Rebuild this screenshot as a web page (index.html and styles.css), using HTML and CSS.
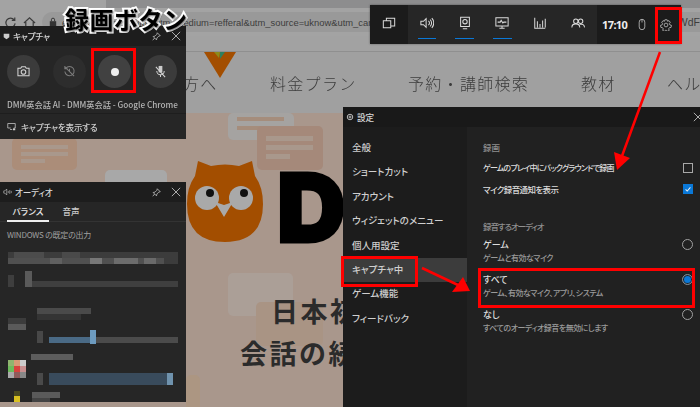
FILE: index.html
```html
<!DOCTYPE html>
<html lang="ja">
<head>
<meta charset="utf-8">
<title>録画ボタン</title>
<link rel="stylesheet" href="styles.css">
</head>
<body>
<div class="desktop">
  <div class="screen">
    <main class="page">
      <div class="tabstrip"><div class="tab-active"></div></div>
      <div class="toolbar">
        <svg class="tool" viewBox="0 0 14 14"><path d="M11 4.200A5 5 0 1 0 12 8M11.600 1.500v3.200H8.400"/></svg>
        <svg class="tool" viewBox="0 0 14 14"><path d="M1 7.500 7 2l6 5.500M3 6.500V12.500h8V6.500"/></svg>
        <div class="urlbar">
          <svg class="lock" viewBox="0 0 10 12"><rect x="1" y="5" width="8" height="6.500"/><path class="shackle" d="M3 5V3.200a2 2 0 0 1 4 0V5"/></svg>
          <span class="url">eikaiwa.dmm.com/lp/?utm_medium=refferal&amp;utm_source=uknow&amp;utm_campaign</span>
          <span class="url url-end">WdF</span>
        </div>
      </div>
      <div class="bookmarks"></div>
      <nav class="nav">
        <span class="nav-a">方へ</span>
        <span class="nav-b">料金プラン</span>
        <span class="nav-c">予約・講師検索</span>
        <span class="nav-d">教材</span>
        <span class="nav-e">ヘル</span>
        <svg class="brand" viewBox="0 0 32 26"><path fill="#a34e00" d="M0 0h32L16 26z"/><path fill="#8c8a1c" d="M10 0h6l-1 6z"/><path fill="#2f7f5f" d="M16 0h5l-5 7z"/></svg>
      </nav>
      <section class="hero">
        <i class="bubble b0"></i><i class="bubble b1"></i><i class="bubble b2"></i><i class="bubble b3"></i>
        <i class="bubble b4"></i><i class="bubble b5"></i><i class="bubble b6"></i>
        <div class="logo">
          <svg class="owl" viewBox="0 0 76 81">
            <path fill="#a34e00" d="M11 0 24 5Q38 2 52 5L65 0 68 15Q76 26 76 43 76 81 38 81 0 81 0 43 0 26 8 15z"/>
            <circle cx="20" cy="37" r="12" fill="#a9a9a9"/><circle cx="54" cy="37" r="12" fill="#a9a9a9"/>
            <circle cx="23" cy="32" r="4" fill="#111"/><circle cx="57" cy="32" r="4" fill="#111"/>
            <path fill="#a9a9a9" d="M28 41 37 44 46 41 37 56z"/>
          </svg>
          <span class="logo-d">D</span>
        </div>
        <h2 class="head1">日本初</h2>
        <h2 class="head2">会話の続</h2>
      </section>
    </main>

    <section class="win capture">
      <header class="titlebar">
        <svg class="ti" viewBox="0 0 10 10"><path class="fill" d="M1 1h8v5L5 9 1 6z"/></svg>
        <span class="ttl">キャプチャ</span>
        <svg class="pin" viewBox="0 0 12 12"><path d="M7 1 11 5 9 5.500 6.500 8 6 10.500 1.500 6 4 5.500 6.500 3zM3.500 8 1 11"/></svg>
        <svg class="close" viewBox="0 0 12 12"><path d="M1 1 11 11M11 1 1 11"/></svg>
      </header>
      <div class="cap-btns">
        <div class="cbtn"><svg viewBox="0 0 14 14"><path d="M1 3.500h3l1-1.500h4l1 1.500h3v8H1z"/><circle cx="7" cy="7.500" r="2.500"/></svg></div>
        <div class="cbtn off"><svg viewBox="0 0 14 14"><path d="M3 3.500A5 5 0 1 1 2 7M2 1v3h3M7 4v3l2 2M2 2l10 10"/></svg></div>
        <div class="cbtn rec"><i class="dot"></i></div>
        <div class="cbtn"><svg viewBox="0 0 14 14"><path class="fill" d="M5 1h4v7H5z"/><path d="M3 6.500a4 4 0 0 0 8 0M7 10.500V13M2 2l10 11"/></svg></div>
      </div>
      <p class="cap-name">DMM英会話 AI - DMM英会話 - Google Chrome</p>
      <footer class="cap-link">
        <svg viewBox="0 0 12 12"><path d="M1 2h10v6H9M1 2v6h4M4 10h3"/><path class="fill" d="M8 8.500h3v2.500H8z"/></svg>
        <span>キャプチャを表示する</span>
      </footer>
    </section>

    <section class="win audio">
      <header class="titlebar">
        <svg class="ti" viewBox="0 0 12 10"><path d="M5 1 2.500 3.500H1v3h1.500L5 9zM7 3.500v3M9 2.500v5M11 3.500v3"/></svg>
        <span class="ttl">オーディオ</span>
        <svg class="pin" viewBox="0 0 12 12"><path d="M7 1 11 5 9 5.500 6.500 8 6 10.500 1.500 6 4 5.500 6.500 3zM3.500 8 1 11"/></svg>
        <svg class="close" viewBox="0 0 12 12"><path d="M1 1 11 11M11 1 1 11"/></svg>
      </header>
      <div class="tabs"><span class="tab on">バランス</span><span class="tab">音声</span></div>
      <p class="aud-label">WINDOWS の既定の出力</p>
      <svg class="mosaic" viewBox="0 0 186 165" shape-rendering="crispEdges">
        <rect x="8" y="6" width="170" height="12" fill="#3c3c3c"/>
        <rect x="8" y="12" width="156" height="6" fill="#505050"/>
        <rect x="14" y="6" width="30" height="6" fill="#4c4c4c"/>
        <rect x="50" y="12" width="12" height="6" fill="#606060"/>
        <rect x="90" y="12" width="12" height="6" fill="#777"/>
        <rect x="114" y="12" width="24" height="6" fill="#6c6c6c"/>
        <rect x="144" y="12" width="12" height="6" fill="#6a6a6a"/>
        <rect x="62" y="6" width="18" height="6" fill="#4a4a4a"/>
        <rect x="8" y="29" width="6" height="12" fill="#3e3e3e"/>
        <rect x="25" y="25" width="7" height="16" fill="#5a5a5a"/>
        <rect x="32" y="35" width="146" height="6" fill="#3f3f3f"/>
        <rect x="8" y="72" width="18" height="6" fill="#3c3c3c"/>
        <rect x="8" y="78" width="18" height="6" fill="#5a5a5a"/>
        <rect x="37" y="62" width="54" height="6" fill="#4a4a4a"/>
        <rect x="37" y="68" width="44" height="6" fill="#343434"/>
        <rect x="37" y="85" width="6" height="12" fill="#484848"/>
        <rect x="49" y="91" width="42" height="6" fill="#4a6a85"/>
        <rect x="90" y="84" width="6" height="14" fill="#6d9bbf"/>
        <rect x="96" y="91" width="82" height="6" fill="#4b4b4b"/>
        <rect x="31" y="108" width="42" height="6" fill="#5c5c5c"/>
        <rect x="37" y="127" width="6" height="12" fill="#4a4a4a"/>
        <rect x="49" y="127" width="118" height="12" fill="#394b5c"/>
        <rect x="167" y="127" width="6" height="12" fill="#6f92ad"/>
        <rect x="8" y="114" width="6" height="6" fill="#8fb56f"/><rect x="14" y="114" width="6" height="6" fill="#d79a76"/><rect x="20" y="114" width="6" height="6" fill="#ccc"/>
        <rect x="8" y="120" width="6" height="6" fill="#6dbb5c"/><rect x="14" y="120" width="6" height="6" fill="#d8433e"/><rect x="20" y="120" width="6" height="6" fill="#c98f8f"/>
        <rect x="8" y="126" width="6" height="6" fill="#aaa"/><rect x="14" y="126" width="6" height="6" fill="#8e5c5c"/><rect x="20" y="126" width="6" height="6" fill="#888"/>
        <rect x="14" y="150" width="6" height="7" fill="#d8c020"/><rect x="14" y="145" width="6" height="5" fill="#4a4a20"/>
        <rect x="32" y="146" width="28" height="6" fill="#5a5a5a"/>
        <rect x="32" y="152" width="18" height="5" fill="#444"/>
      </svg>
    </section>

    <section class="bar">
      <div class="bar-sec dark"><div class="bar-item">
        <svg viewBox="0 0 16 16"><path d="M1.500 5.500h8.500v8H1.500zM5 5.500V2.500h9.500v9H10"/></svg></div></div>
      <div class="bar-sec mid">
        <div class="bar-item sel"><svg viewBox="0 0 16 16"><path d="M7 3 4 6H1v4h3l3 3zM9.500 5.500a3 3 0 0 1 0 5M11.500 4a5.500 5.500 0 0 1 0 8M13.500 2.500a8 8 0 0 1 0 11"/></svg></div>
        <div class="bar-item sel"><svg viewBox="0 0 16 16"><path d="M3 1.500h10v10.500H3zM5.500 14.500h5"/><circle cx="8" cy="6.500" r="2.500"/></svg></div>
        <div class="bar-item sel"><svg viewBox="0 0 16 16"><path d="M1 2h14v9.500H1zM5 14h6M8 11.500V14M3 7h3l1-2 2 3 1-1h3"/></svg></div>
        <div class="bar-item"><svg viewBox="0 0 16 16"><path d="M2 2v12h12M5 13V6M8 13V9M11 13V5M14 13V3"/></svg></div>
        <div class="bar-item"><svg viewBox="0 0 16 16"><circle cx="5.500" cy="6" r="2.500"/><circle cx="11" cy="6" r="2.500"/><path d="M1 13q0-4 4.500-4T10 13M10 9.500q5-1 5.500 3.500"/></svg></div>
      </div>
      <div class="bar-sec dark right">
        <span class="time">17:10</span>
        <svg class="mouse" viewBox="0 0 10 16"><rect x="1.500" y="1.500" width="7" height="13" rx="3.500"/><path d="M5 1.500v4"/></svg>
        <svg class="gear" viewBox="0 0 16 16"><path d="M6.500 1h3l.5 2 2-.8 1.700 2.300-1.300 1.700.9 1.800 2 .5-.6 2.800-2.100.2-1.100 1.700.9 1.900-2.500 1.300-1.400-1.500H7.400l-1.400 1.500-2.500-1.300.9-1.900-1.100-1.700-2.100-.2L.600 8.500l2-.5.900-1.800L2.300 4.500 4 2.200l2 .8z"/><circle cx="8" cy="8" r="2.500"/></svg>
      </div>
    </section>

    <section class="win settings">
      <header class="set-title">
        <svg class="set-gear" viewBox="0 0 16 16"><circle cx="8" cy="8" r="5.500"/><circle cx="8" cy="8" r="2"/></svg>
        <span class="ttl">設定</span>
        <svg class="close" viewBox="0 0 12 12"><path d="M1 1 11 11M11 1 1 11"/></svg>
      </header>
      <div class="set-body">
        <ul class="set-menu">
          <li>全般</li><li>ショートカット</li><li>アカウント</li><li>ウィジェットのメニュー</li><li>個人用設定</li>
          <li class="cur">キャプチャ中</li><li>ゲーム機能</li><li>フィードバック</li>
        </ul>
        <div class="set-main">
          <h3 class="sec">録画</h3>
          <div class="check-row"><span>ゲームのプレイ中にバックグラウンドで録画</span><i class="box"></i></div>
          <div class="check-row tight"><span>マイク録音通知を表示</span><i class="box on"><svg viewBox="0 0 10 10"><path d="M2 5.500 4 7.500 8 3"/></svg></i></div>
          <h3 class="sec sec2">録音するオーディオ</h3>
          <div class="radio-row"><div><b>ゲーム</b><small>ゲームと有効なマイク</small></div><i class="radio"></i></div>
          <div class="radio-row"><div><b>すべて</b><small>ゲーム、有効なマイク、アプリ、システム</small></div><i class="radio on"></i></div>
          <div class="radio-row"><div><b>なし</b><small>すべてのオーディオ録音を無効にします</small></div><i class="radio"></i></div>
        </div>
      </div>
    </section>
  </div>

  <div class="callout">録画ボタン</div>
  <i class="mark m-rec"></i>
  <i class="mark m-gear"></i>
  <i class="mark m-menu"></i>
  <i class="mark m-all"></i>
  <svg class="arrows" viewBox="0 0 700 407">
    <path d="M660 52 622 156M422 268 458 285"/>
    <polygon points="617,170 614,152 630,158"/>
    <polygon points="470,291 452,292 463,277"/>
  </svg>
</div>
</body>
</html>
```

FILE: styles.css
```css
* { box-sizing: border-box; }
html, body { margin: 0; padding: 0; background: #000; }
ul, p, h2, h3 { margin: 0; padding: 0; list-style: none; }
i { display: block; font-style: normal; }

.desktop {
  position: relative;
  width: 700px;
  height: 407px;
  overflow: hidden;
  font-family: "Noto Sans CJK JP", "Noto Sans", sans-serif;
  font-feature-settings: "palt";
}
.screen { position: absolute; inset: 0; filter: blur(0.4px); }

/* ---------- dimmed web page ---------- */
.page { width: 700px; height: 407px; display: flex; flex-direction: column; background: #a9978c; }
.tabstrip { height: 8px; background: #8d8d8e; }
.tab-active { width: 106px; height: 8px; background: #a3a3a3; }
.toolbar { height: 28px; background: #a3a3a3; display: flex; align-items: center; gap: 6px; padding-left: 4px; }
.tool { width: 13px; height: 13px; flex: none; fill: none; stroke: #3c3c3c; stroke-width: 1.300; }
.urlbar { flex: 1; height: 20px; padding-left: 7px; border-radius: 10px 0 0 10px; background: #999; display: flex; align-items: center; gap: 5px; overflow: hidden; }
.lock { width: 8px; height: 10px; flex: none; fill: #333; }
.shackle { fill: none; stroke: #333; stroke-width: 1.200; }
.url { font: 9.400px "Liberation Sans", sans-serif; color: #3d3d3d; white-space: nowrap; }
.url-end { margin-left: auto; font-size: 10.500px; }
.bookmarks { height: 16px; background: #a2a2a2; border-bottom: 1px solid #8f8f8f; }
.nav { position: relative; height: 61px; background: #a0a0a0; font-size: 16px; color: #3c3c3c; display: flex; align-items: center; padding-left: 183px; white-space: nowrap; font-weight: 300; letter-spacing: 1.300px; font-feature-settings: normal; }
.nav span { flex: none; }
.nav-a { width: 87px; }
.nav-b { width: 138px; }
.nav-c { width: 173px; }
.nav-d { width: 86px; }
.brand { position: absolute; left: 204px; top: 0; width: 32px; height: 26px; }
.hero { position: relative; flex: 1; width: 343px; padding: 48px 0 0 187px; overflow: hidden; }
.bubble { position: absolute; border-radius: 5px; }
.b0 { left: 105px; top: 57px; width: 62px; height: 24px; background: #a8a8a8; }
.b1 { left: 12px; top: 25px; width: 65px; height: 32px;
  background: linear-gradient(#a9988c, #a9988c) 9px 7px / 47px 4px no-repeat,
    linear-gradient(#a9988c, #a9988c) 9px 14px / 47px 4px no-repeat,
    linear-gradient(#a9988c, #a9988c) 9px 21px / 24px 4px no-repeat, #ab8d79; }
.b2 { left: 228px; top: 0; width: 66px; height: 27px;
  background: linear-gradient(#a58d7c, #a58d7c) 9px 4px / 47px 4px no-repeat,
    linear-gradient(#a58d7c, #a58d7c) 9px 13px / 47px 4px no-repeat, #a5a3a1; }
.b3 { left: 257px; top: 13px; width: 66px; height: 44px;
  background: linear-gradient(#a9988c, #a9988c) 9px 10px / 47px 5px no-repeat,
    linear-gradient(#a9988c, #a9988c) 9px 19px / 47px 5px no-repeat,
    linear-gradient(#a9988c, #a9988c) 9px 28px / 24px 5px no-repeat, #a5897a; }
.b4 { left: 228px; top: 160px; width: 65px; height: 43px; background: #ab9f97; }
.b5 { left: 256px; top: 189px; width: 67px; height: 44px; background: #a99484; }
.b6 { left: 186px; top: 262px; width: 14px; height: 40px; background: #ac9682; }
.logo { position: relative; display: flex; align-items: flex-start; height: 81px; }
.owl { position: relative; width: 76px; height: 81px; flex: none; }
.logo-d { margin: -12px 0 0 14px; font: 900 95px/118px Inter, sans-serif; color: #000; -webkit-text-stroke: 3px #000; }
.head1, .head2 { position: relative; font-size: 27px; line-height: 40px; font-weight: 700; color: #2b2b2b; letter-spacing: 2.500px; white-space: nowrap; font-feature-settings: normal; }
.head1 { margin: 49px 0 0 84px; }
.head2 { margin: 2px 0 0 53px; }

/* ---------- game bar windows ---------- */
.win { position: absolute; color: #ddd; background: #262626; overflow: hidden; }
.titlebar { height: 20px; background: #1d1d1d; display: flex; align-items: center; padding: 0 5px 0 3px; gap: 3px; }
.ti { width: 7px; height: 7px; flex: none; fill: none; stroke: #ccc; }
.fill { fill: #ccc; stroke: none; }
.ttl { font-size: 8.600px; font-weight: 500; color: #d8d8d8; flex: 1; letter-spacing: -.2px; }
.pin, .close { width: 9px; height: 9px; flex: none; fill: none; stroke: #c9c9c9; stroke-width: 1; }
.close { width: 10px; height: 10px; margin-left: 7px; }

.capture { left: 0; top: 26px; width: 186px; height: 113px; }
.cap-btns { display: flex; gap: 12.500px; padding: 9px 0 0 7px; height: 50px; }
.cbtn { width: 33px; height: 33px; border-radius: 50%; background: #3b3b3b; display: flex; align-items: center; justify-content: center; }
.cbtn svg { width: 13px; height: 13px; fill: none; stroke: #d4d4d4; stroke-width: 1.100; }
.cbtn.off { background: #2d2d2d; }
.cbtn.off svg { stroke: #7d7d7d; }
.cbtn.rec { background: #414141; }
.dot { width: 8px; height: 8px; border-radius: 50%; background: #eee; }
.cap-name { padding-left: 7px; font: 500 8.200px/17px "Noto Sans CJK JP", sans-serif; color: #b5b5b5; height: 18px; white-space: nowrap; border-bottom: 1px solid #1e1e1e; }
.cap-link { display: flex; align-items: center; gap: 5px; height: 25px; padding-left: 7px; font-size: 8.600px; font-weight: 500; color: #ccc; letter-spacing: -.2px; }
.cap-link svg { width: 9px; height: 9px; fill: none; stroke: #ccc; }

.audio { left: 0; top: 182px; width: 186px; height: 220px; }
.audio .ti { width: 9px; height: 8px; stroke-width: .8; }
.tabs { display: flex; height: 20px; border-bottom: 1px solid #333; padding-left: 7px; font-size: 8.600px; }
.tab { width: 42px; text-align: center; line-height: 18px; color: #ccc; font-weight: 500; margin-right: 10px; }
.tab + .tab { width: 24px; }
.tab.on { height: 20px; color: #e8e8e8; border-bottom: 2px solid #eee; }
.aud-label { padding: 7px 0 0 7px; font-size: 8px; line-height: 12px; color: #a0a0a0; letter-spacing: -.25px; }
.mosaic { display: block; width: 186px; height: 165px; margin-top: 5px; }

.bar { position: absolute; left: 370px; top: 5px; width: 311px; height: 39px; display: flex; box-shadow: 0 0 2px rgba(0,0,0,.4); }
.bar-sec { display: flex; align-items: center; }
.dark { width: 38px; background: #1b1b1b; }
.mid { width: 189px; background: #262626; }
.right { flex: 1; padding-left: 5px; }
.bar-item { width: 37.800px; height: 39px; position: relative; display: flex; align-items: center; justify-content: center; padding-bottom: 3px; }
.bar-item svg { width: 14px; height: 14px; fill: none; stroke: #dcdcdc; stroke-width: 1.150; }
.sel::after { content: ""; position: absolute; left: 9.500px; right: 9.500px; bottom: 5px; height: 1.500px; background: #0a78d7; }
.time { font: 700 11px "Noto Sans", sans-serif; color: #eee; width: 33px; letter-spacing: -.6px; flex: none; }
.mouse { width: 8px; height: 13px; margin-left: 3px; flex: none; fill: none; stroke: #c4c4c4; }
.gear { width: 12px; height: 12px; margin-left: 14px; flex: none; fill: none; stroke: #c8c8c8; stroke-width: 1; }

.settings { left: 343px; top: 107px; width: 357px; height: 300px; background: #1c1c1c; }
.set-title { height: 20px; background: #191919; display: flex; align-items: center; gap: 3px; padding-left: 3px; margin-right: -3px; }
.set-gear { width: 8px; height: 8px; fill: none; stroke: #bbb; stroke-width: 2; }
.set-body { display: flex; height: 280px; }
.set-menu { width: 124px; padding-top: 9px; font-size: 9.500px; font-weight: 500; color: #cfcfcf; }
.set-menu li { height: 24.400px; line-height: 22px; padding-left: 9px; }
.set-menu .cur { background: #3c3c3c; }
.set-main { flex: 1; background: #212121; padding: 13px 7px 0 16px; font-size: 9px; font-weight: 500; color: #ddd; }
.sec { font-size: 8.500px; line-height: 14px; font-weight: 500; color: #8f8f8f; }
.sec2 { margin-top: 20px; letter-spacing: -1.100px; }
.check-row { display: flex; align-items: center; justify-content: space-between; height: 21px; font-size: 8px; letter-spacing: -.8px; }
.tight { font-size: 8.500px; letter-spacing: -.6px; }
.sec + .check-row { margin-top: 3px; }
.box { width: 10px; height: 10px; border: 1px solid #a8a8a8; }
.box.on { background: #0a78d7; border-color: #0a78d7; }
.box svg { display: block; width: 8px; height: 8px; fill: none; stroke: #eee; stroke-width: 1.300; }
.radio-row { display: flex; justify-content: space-between; align-items: flex-start; height: 35px; }
.sec2 + .radio-row { margin-top: 5px; }
.radio-row b { display: block; font-weight: 500; line-height: 13px; }
.radio-row small { display: block; font-size: 8px; line-height: 13px; color: #9a9a9a; letter-spacing: -.5px; }
.radio { width: 11px; height: 11px; margin-top: 1px; border: 1px solid #a0a0a0; border-radius: 50%; flex: none; }
.radio.on { background: #0a78d7; box-shadow: inset 0 0 0 1px #222; border-color: #888; }

/* ---------- annotations ---------- */
.callout { position: absolute; left: 65px; top: 2px; font-size: 24px; line-height: 34px; font-weight: 700; color: #000; letter-spacing: .5px; font-feature-settings: normal; -webkit-text-stroke: 4px #fff; paint-order: stroke fill; text-shadow: 1px 1px 2px rgba(0,0,0,.6); }
.mark { position: absolute; border: 3px solid #f00; }
.m-rec { left: 91px; top: 48px; width: 45px; height: 45px; }
.m-gear { left: 655px; top: 7px; width: 27px; height: 37px; }
.m-menu { left: 341px; top: 256px; width: 77px; height: 31px; }
.m-all { left: 478px; top: 268px; width: 217px; height: 40px; }
.arrows { position: absolute; inset: 0; width: 700px; height: 407px; }
.arrows path { fill: none; stroke: #f00; stroke-width: 2.500; }
.arrows polygon { fill: #f00; }
```
